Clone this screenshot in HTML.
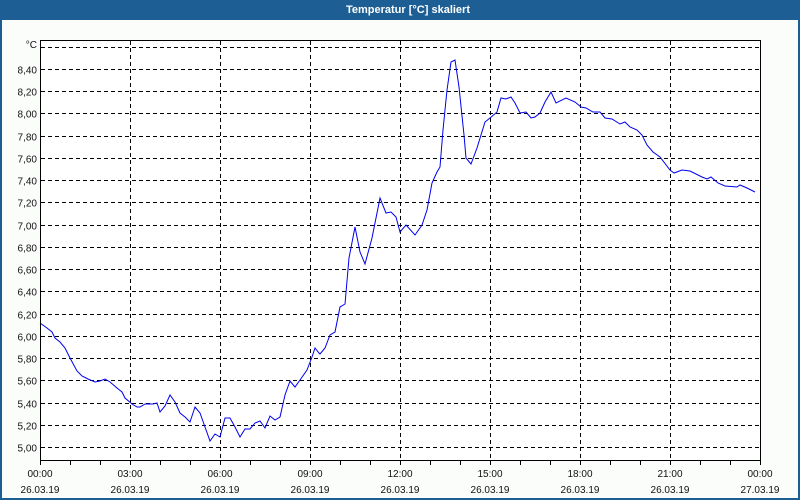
<!DOCTYPE html>
<html><head><meta charset="utf-8"><style>
html,body{margin:0;padding:0;width:800px;height:500px;overflow:hidden;background:#fbfdfb}
svg{display:block}
text{font-family:"Liberation Sans","DejaVu Sans",sans-serif;font-size:10px;fill:#111}
</style></head><body>
<svg width="800" height="500" xmlns="http://www.w3.org/2000/svg">
<rect x="0" y="0" width="800" height="500" fill="#fbfdfb"/>
<rect x="0" y="0" width="800" height="20" fill="#1d5f95"/>
<rect x="0" y="0" width="2" height="500" fill="#1d5f95"/>
<rect x="798" y="0" width="2" height="500" fill="#1d5f95"/>
<rect x="0" y="498" width="800" height="2" fill="#1d5f95"/>
<text x="408" y="13" text-anchor="middle" style="font-weight:bold;font-size:11px;fill:#fff">Temperatur [°C] skaliert</text>
<rect x="40" y="40" width="720" height="420" fill="#fff"/>
<g stroke="#000" stroke-width="1" stroke-dasharray="4,3" fill="none" id="grid"></g>
<g id="lbl"></g>
<text x="37" y="48" text-anchor="end">°C</text>
<polyline fill="none" stroke="#0000ee" stroke-width="1" points="40,323 47,328 52,332 55,338 60,342 65,348 70,358 77,371 82,376 88,379 95,382 100,381 105,379 110,382 117,388 122,392 125,398 132,404 137,407 140,407 145,404 153,404 157,403 160,412 165,406 170,395 175,402 180,413 185,417 190,422 195,407 200,413 205,427 210,441 215,434 220,437 225,418 230,418 235,427 240,437 245,429 250,429 255,423 260,421 265,428 270,416 275,420 280,417 285,395 290,381 295,387 300,380 307,370 312,357 315,348 319,353 320,354 325,348 330,335 335,332 340,307 345,304 349,258 355,227 360,252 365,264 372,238 380,198 386,213 391,212 396,217 400,232 406,225 415,235 422,225 427,210 432,183 437,172 440,167 443,130 447,90 451,62 455,60 459,87 464,135 466,158 471,164 477,148 485,122 490,118 497,112 501,98 506,99 511,97 515,103 520,113 526,112 531,118 535,117 540,113 545,102 551,92 556,103 566,98 575,102 581,107 586,108 593,112 600,112 605,118 612,119 620,124 625,122 630,127 637,130 642,135 647,145 653,152 660,157 670,170 674,173 682,170 690,171 702,177 707,179 711,177 718,183 725,186 737,187 740,185 747,188 755,192"/>
<rect x="40.5" y="40.5" width="720" height="420" fill="none" stroke="#000" stroke-width="1"/>
<g id="ticks" stroke="#000" stroke-width="1"></g>
</svg>
<script>
var ns="http://www.w3.org/2000/svg";
var g=document.getElementById("grid"),l=document.getElementById("lbl"),t=document.getElementById("ticks");
function el(p,n,a,txt){var e=document.createElementNS(ns,n);for(var k in a)e.setAttribute(k,a[k]);if(txt)e.textContent=txt;p.appendChild(e);}
for(var k=0;k<=18;k++){var y=Math.round(447-k*22.24)+0.5;el(g,"line",{x1:41,x2:760,y1:y,y2:y});
 if(k<18){var v=(5+k*0.2).toFixed(2).replace(".",",");el(l,"text",{x:37,y:y+4,"text-anchor":"end"},v);}}
for(var i=1;i<8;i++){var x=40+i*90+0.5;el(g,"line",{x1:x,x2:x,y1:41,y2:460});}
for(var i=0;i<=24;i++){var x=40+i*30+0.5;el(t,"line",{x1:x,x2:x,y1:460,y2:465});}
var times=["00:00","03:00","06:00","09:00","12:00","15:00","18:00","21:00","00:00"];
for(var i=0;i<9;i++){var x=40+i*90;el(l,"text",{x:x,y:477,"text-anchor":"middle"},times[i]);
 el(l,"text",{x:x,y:493,"text-anchor":"middle"},i==8?"27.03.19":"26.03.19");}
</script>
</body></html>
